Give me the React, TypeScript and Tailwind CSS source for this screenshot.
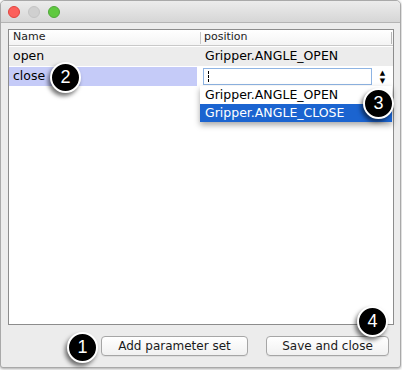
const font = { fontFamily: '"DejaVu Sans", Verdana, sans-serif' }

const Badge = ({ n, className }: { n: number; className: string }) => (
  <div
    className={`absolute flex h-[31px] w-[31px] items-center justify-center rounded-full border-2 border-white bg-black text-[18px] text-white shadow-[-2px_3px_4px_rgba(0,0,0,0.55)] ${className}`}
    style={{ fontFamily: '"Liberation Sans", Arial, sans-serif' }}
  >
    {n}
  </div>
)

const Button = ({ label, className }: { label: string; className: string }) => (
  <button
    className={`flex h-[20px] items-center justify-center rounded-[4px] border border-[#a6a6a6] bg-gradient-to-b from-white to-[#f1f1f1] text-[12px] text-[#1a1a1a] shadow-[0_1px_0_rgba(0,0,0,0.06)] ${className}`}
  >
    {label}
  </button>
)

export default function App() {
  return (
    <div className="relative h-[370px] w-[402px] overflow-hidden bg-white" style={font}>
      <div className="flex h-[368px] w-[401px] flex-col overflow-hidden rounded-t-[5px] rounded-b-[3px] border border-[#a9a9a9] bg-[#ececec] shadow-[0_1px_3px_rgba(0,0,0,0.35)]">
        {/* title bar */}
        <div className="flex h-[22px] items-center gap-[8px] border-b border-[#b4b4b4] bg-gradient-to-b from-[#ececec] to-[#d6d6d6] pl-[7px]">
          <span className="h-[12px] w-[12px] rounded-full border border-[#e0443e] bg-[#fc605b]" />
          <span className="h-[12px] w-[12px] rounded-full border border-[#c4c4c4] bg-[#d0d0d0]" />
          <span className="h-[12px] w-[12px] rounded-full border border-[#4fa73a] bg-[#5fc93f]" />
        </div>

        {/* table */}
        <div className="relative ml-[7px] mr-[6px] mt-[6px] h-[296px] border border-[#8c8c8c] bg-white">
          <div className="flex h-[16px] items-center border-b border-[#c9c9c9] bg-gradient-to-b from-white to-[#f4f4f4] text-[11px] text-[#222]">
            <div className="w-[191px] pl-[4px]">Name</div>
            <div className="h-[12px] w-px bg-[#c6c6c6]" />
            <div className="flex-1 pl-[3px]">position</div>
            <div className="mr-[1px] h-[12px] w-px bg-[#b5b5b5]" />
          </div>
          <div className="mt-[1px] flex h-[19px] items-center bg-[#ececec] text-[12.5px] text-black">
            <div className="w-[192px] pl-[4px]">open</div>
            <div className="flex-1 pl-[4px]">Gripper.ANGLE_OPEN</div>
          </div>
          <div className="mt-[1px] flex h-[19px] items-stretch text-[12.5px] text-black">
            <div className="flex w-[188px] items-center bg-[#c5cbf8] pl-[4px]">close</div>
            <div className="ml-[6px] mt-[1px] flex h-[17px] w-[169px] items-center border border-[#8eb4e3] bg-white pl-[4px]">
              <span className="h-[11px] border-l border-dashed border-black" />
            </div>
            <div className="flex flex-1 flex-col items-center justify-center text-[7px] leading-[8px]">
              <span>▲</span>
              <span>▼</span>
            </div>
          </div>

          {/* popup */}
          <div className="absolute left-[191px] top-[56px] w-[192px] bg-white text-[12.5px] shadow-[0_3px_6px_rgba(0,0,0,0.35)]">
            <div className="flex h-[18px] items-center pl-[5px] text-black">Gripper.ANGLE_OPEN</div>
            <div className="flex h-[18px] items-center bg-[#1b64d0] pl-[5px] text-white">Gripper.ANGLE_CLOSE</div>
          </div>
        </div>

        {/* buttons */}
        <div className="mt-[11px] flex justify-end gap-[18px] pr-[11px]">
          <Button label="Add parameter set" className="w-[147px]" />
          <Button label="Save and close" className="w-[123px]" />
        </div>
      </div>

      <Badge n={2} className="left-[50px] top-[62px]" />
      <Badge n={3} className="left-[363px] top-[88px]" />
      <Badge n={1} className="left-[67px] top-[332px]" />
      <Badge n={4} className="left-[357px] top-[306px]" />
    </div>
  )
}
